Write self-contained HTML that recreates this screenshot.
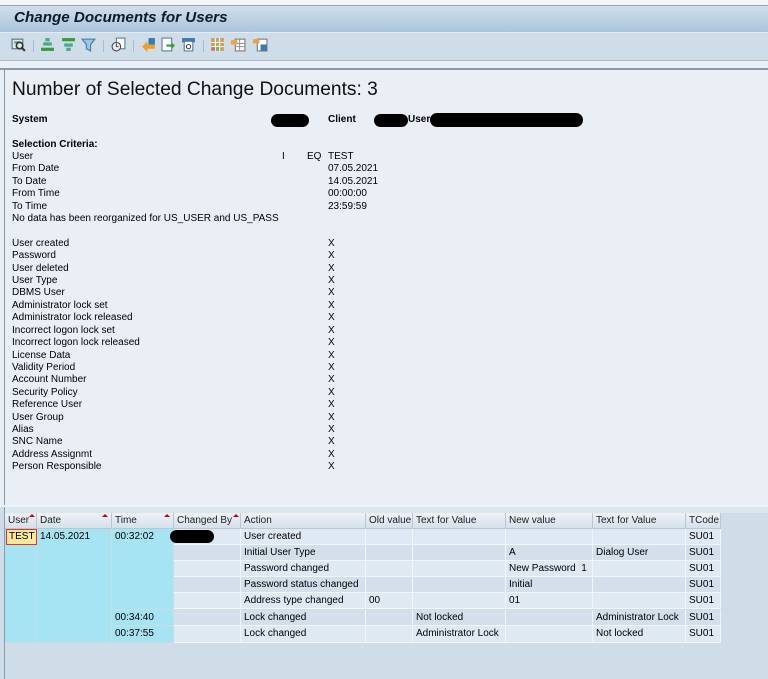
<!DOCTYPE html>
<html><head><meta charset="utf-8"><style>
*{margin:0;padding:0;box-sizing:border-box}
body{width:768px;height:679px;overflow:hidden;background:#e9eff5;font-family:"Liberation Sans",Tahoma,sans-serif;font-size:10px;color:#000;position:relative}
.a{position:absolute;white-space:nowrap}
.blk{position:absolute;background:#000;border-radius:7px}
.ic{position:absolute;top:37px;width:15px;height:15px}
.sep{position:absolute;top:40px;width:1px;height:12px;background:#a9bccd}
.c{position:absolute;height:16px;line-height:16px;padding-left:3px;white-space:nowrap;overflow:hidden;border-right:1px solid #f2f6fa;border-bottom:1px solid #f2f6fa}
.h{background:linear-gradient(#eef2f6,#d6e0ea);border-right:1px solid #b9c6d3;border-bottom:1px solid #b9c6d3;color:#222}
.k{background:#a6e3f3;border-right:1px solid #c9dde6;border-bottom:1px solid #c9dde6}
.r0{background:#dfe9f4}
.r1{background:#d3dfeb}
.tri{position:absolute;top:1px;width:0;height:0;border-left:3px solid transparent;border-right:3px solid transparent;border-bottom:3px solid #c00}
</style></head><body>
<div class="a" style="left:0;top:0;width:768px;height:5px;background:#f3f5f8"></div>
<div class="a" style="left:0;top:5px;width:768px;height:1px;background:#9aa8b6"></div>
<div class="a" style="left:0;top:6px;width:768px;height:26px;background:linear-gradient(#d0dfed,#aac4dc)"></div>
<div class="a" style="left:14px;top:9px;font-size:15.2px;font-weight:bold;font-style:italic;color:#0c1a2a">Change Documents for Users</div>
<div class="a" style="left:0;top:32px;width:768px;height:28px;background:#cedde8;border-top:1px solid #e3ecf3"></div>
<div class="a" style="left:0;top:60px;width:768px;height:1px;background:#a9b9cb"></div>
<div class="a" style="left:0;top:61px;width:768px;height:7px;background:#eaf0f5"></div>
<div class="a" style="left:0;top:68px;width:768px;height:2px;background:#8a9cab"></div>

<svg class="ic" style="left:11px" viewBox="0 0 14 14"><rect x="1" y="2" width="10" height="9" fill="#dfe8ef" stroke="#5a6b78"/><rect x="3" y="4" width="5" height="2" fill="#4ab04a"/><circle cx="8" cy="8" r="3" fill="none" stroke="#333" stroke-width="1.5"/><path d="M10 10l3 3" stroke="#333" stroke-width="2"/></svg>
<div class="sep" style="left:33px"></div>
<svg class="ic" style="left:40px" viewBox="0 0 14 14"><rect x="5" y="1" width="4" height="3" fill="#4a8"/><rect x="3" y="5" width="8" height="3" fill="#4a8"/><rect x="1" y="10" width="12" height="3" fill="#3a9a3a"/></svg>
<svg class="ic" style="left:61px" viewBox="0 0 14 14"><rect x="1" y="1" width="12" height="3" fill="#3a9a3a"/><rect x="3" y="6" width="8" height="3" fill="#4a8"/><rect x="5" y="10" width="4" height="3" fill="#4a8"/></svg>
<svg class="ic" style="left:81px" viewBox="0 0 14 14"><path d="M1 2h12l-4 5v6l-4-2v-4z" fill="#9cc6e0" stroke="#3d7aa6"/></svg>
<div class="sep" style="left:103px"></div>
<svg class="ic" style="left:111px" viewBox="0 0 14 14"><rect x="5" y="1" width="8" height="10" fill="#fff" stroke="#5b7a99"/><circle cx="5" cy="9" r="4" fill="#eef" stroke="#444"/><path d="M5 6v3h2" stroke="#444" fill="none"/></svg>
<div class="sep" style="left:133px"></div>
<svg class="ic" style="left:141px" viewBox="0 0 14 14"><path d="M1 9l5-5v3h7v4H6v3z" fill="#f0a020"/><rect x="7" y="1" width="6" height="6" fill="#3c78b4"/></svg>
<svg class="ic" style="left:161px" viewBox="0 0 14 14"><rect x="1" y="1" width="9" height="12" fill="#fff" stroke="#5b7a99"/><path d="M5 7h5V5l3 3-3 3V9H5z" fill="#3a9a3a"/></svg>
<svg class="ic" style="left:181px" viewBox="0 0 14 14"><rect x="1" y="1" width="12" height="4" fill="#3c78b4"/><rect x="3" y="4" width="8" height="9" fill="#fff" stroke="#5b7a99"/><circle cx="7" cy="9" r="2" fill="none" stroke="#444"/></svg>
<div class="sep" style="left:203px"></div>
<svg class="ic" style="left:210px" viewBox="0 0 14 14"><rect x="1" y="1" width="12" height="12" fill="#c9a064"/><path d="M1 5h12M1 9h12M5 1v12M9 1v12" stroke="#fff"/><rect x="1.5" y="9.5" width="3" height="3" fill="#d66"/><rect x="5.5" y="9.5" width="3" height="3" fill="#6b6"/></svg>
<svg class="ic" style="left:231px" viewBox="0 0 14 14"><rect x="4" y="2" width="9" height="11" fill="#fff" stroke="#777"/><path d="M4 6h9M4 9h9M8 2v11" stroke="#999"/><rect x="0" y="3" width="6" height="4" fill="#f0a040"/></svg>
<svg class="ic" style="left:253px" viewBox="0 0 14 14"><rect x="4" y="2" width="9" height="11" fill="#fff" stroke="#777"/><rect x="0" y="2" width="6" height="4" fill="#f0a040"/><rect x="7" y="7" width="6" height="6" fill="#3c78b4"/></svg>

<div class="a" style="left:4px;top:70px;width:1px;height:436px;background:#8a9cab"></div>
<div class="a" style="left:12px;top:79px;font-size:19.2px;color:#111">Number of Selected Change Documents: 3</div>
<div class="a" style="left:12px;top:114px;font-weight:bold">System</div>
<div class="blk" style="left:271px;top:114px;width:38px;height:13px"></div>
<div class="a" style="left:328px;top:114px;font-weight:bold">Client</div>
<div class="blk" style="left:374px;top:114px;width:34px;height:13px"></div>
<div class="a" style="left:408px;top:114px;font-weight:bold">User</div>
<div class="blk" style="left:430px;top:113px;width:153px;height:14px"></div>
<div class="a" style="left:12px;top:139px;font-weight:bold">Selection Criteria:</div>
<div class="a" style="left:12px;top:151px;line-height:12.4px">User<br>From Date<br>To Date<br>From Time<br>To Time<br>No data has been reorganized for US_USER and US_PASS<br><br>User created<br>Password<br>User deleted<br>User Type<br>DBMS User<br>Administrator lock set<br>Administrator lock released<br>Incorrect logon lock set<br>Incorrect logon lock released<br>License Data<br>Validity Period<br>Account Number<br>Security Policy<br>Reference User<br>User Group<br>Alias<br>SNC Name<br>Address Assignmt<br>Person Responsible</div>
<div class="a" style="left:282px;top:151px">I</div>
<div class="a" style="left:307px;top:151px">EQ</div>
<div class="a" style="left:328px;top:151px;line-height:12.4px">TEST<br>07.05.2021<br>14.05.2021<br>00:00:00<br>23:59:59<br><br><br>X<br>X<br>X<br>X<br>X<br>X<br>X<br>X<br>X<br>X<br>X<br>X<br>X<br>X<br>X<br>X<br>X<br>X<br>X</div>

<div class="a" style="left:0;top:505px;width:768px;height:2px;background:#eef3f7"></div>
<div class="a" style="left:0;top:507px;width:768px;height:172px;background:#cfdde9"></div>
<div class="a" style="left:4px;top:507px;width:1px;height:172px;background:#8a9cab"></div>
<div class="a" style="left:5px;top:507px;width:763px;height:6px;background:#dbe6ef"></div>

<div class="c h" style="left:5px;top:513px;width:32px">User<span class="tri" style="left:24px"></span></div>
<div class="c h" style="left:37px;top:513px;width:75px">Date<span class="tri" style="left:65px"></span></div>
<div class="c h" style="left:112px;top:513px;width:62px">Time<span class="tri" style="left:52px"></span></div>
<div class="c h" style="left:174px;top:513px;width:67px">Changed By<span class="tri" style="left:59px"></span></div>
<div class="c h" style="left:241px;top:513px;width:125px">Action</div>
<div class="c h" style="left:366px;top:513px;width:47px">Old value</div>
<div class="c h" style="left:413px;top:513px;width:93px">Text for Value</div>
<div class="c h" style="left:506px;top:513px;width:87px">New value</div>
<div class="c h" style="left:593px;top:513px;width:93px">Text for Value</div>
<div class="c h" style="left:686px;top:513px;width:35px">TCode</div>

<div class="c k" style="left:5px;top:529px;width:32px;height:114px"></div>
<div class="a" style="left:6px;top:529px;width:31px;height:16px;background:#fde89a;border:1px solid #d33;line-height:14px;padding-left:2px">TEST</div>
<div class="c k" style="left:37px;top:529px;width:75px;height:114px">14.05.2021</div>
<div class="c k" style="left:112px;top:529px;width:62px;height:81px">00:32:02</div>
<div class="c k" style="left:112px;top:610px;width:62px">00:34:40</div>
<div class="c k" style="left:112px;top:626px;width:62px;height:17px">00:37:55</div>

<div class="c r0" style="left:174px;top:529px;width:67px"></div><div class="blk" style="left:170px;top:530px;width:44px;height:13px"></div>
<div class="c r0" style="left:241px;top:529px;width:125px">User created</div><div class="c r0" style="left:366px;top:529px;width:47px"></div><div class="c r0" style="left:413px;top:529px;width:93px"></div><div class="c r0" style="left:506px;top:529px;width:87px"></div><div class="c r0" style="left:593px;top:529px;width:93px"></div><div class="c r0" style="left:686px;top:529px;width:35px">SU01</div>
<div class="c r1" style="left:174px;top:545px;width:67px"></div><div class="c r1" style="left:241px;top:545px;width:125px">Initial User Type</div><div class="c r1" style="left:366px;top:545px;width:47px"></div><div class="c r1" style="left:413px;top:545px;width:93px"></div><div class="c r1" style="left:506px;top:545px;width:87px">A</div><div class="c r1" style="left:593px;top:545px;width:93px">Dialog User</div><div class="c r1" style="left:686px;top:545px;width:35px">SU01</div>
<div class="c r0" style="left:174px;top:561px;width:67px"></div><div class="c r0" style="left:241px;top:561px;width:125px">Password changed</div><div class="c r0" style="left:366px;top:561px;width:47px"></div><div class="c r0" style="left:413px;top:561px;width:93px"></div><div class="c r0" style="left:506px;top:561px;width:87px">New Password&nbsp; 1</div><div class="c r0" style="left:593px;top:561px;width:93px"></div><div class="c r0" style="left:686px;top:561px;width:35px">SU01</div>
<div class="c r1" style="left:174px;top:577px;width:67px"></div><div class="c r1" style="left:241px;top:577px;width:125px">Password status changed</div><div class="c r1" style="left:366px;top:577px;width:47px"></div><div class="c r1" style="left:413px;top:577px;width:93px"></div><div class="c r1" style="left:506px;top:577px;width:87px">Initial</div><div class="c r1" style="left:593px;top:577px;width:93px"></div><div class="c r1" style="left:686px;top:577px;width:35px">SU01</div>
<div class="c r0" style="left:174px;top:593px;width:67px"></div><div class="c r0" style="left:241px;top:593px;width:125px">Address type changed</div><div class="c r0" style="left:366px;top:593px;width:47px">00</div><div class="c r0" style="left:413px;top:593px;width:93px"></div><div class="c r0" style="left:506px;top:593px;width:87px">01</div><div class="c r0" style="left:593px;top:593px;width:93px"></div><div class="c r0" style="left:686px;top:593px;width:35px">SU01</div>
<div class="c r1" style="left:174px;top:610px;width:67px"></div><div class="c r1" style="left:241px;top:610px;width:125px">Lock changed</div><div class="c r1" style="left:366px;top:610px;width:47px"></div><div class="c r1" style="left:413px;top:610px;width:93px">Not locked</div><div class="c r1" style="left:506px;top:610px;width:87px"></div><div class="c r1" style="left:593px;top:610px;width:93px">Administrator Lock</div><div class="c r1" style="left:686px;top:610px;width:35px">SU01</div>
<div class="c r0" style="left:174px;top:626px;width:67px;height:17px"></div><div class="c r0" style="left:241px;top:626px;width:125px;height:17px">Lock changed</div><div class="c r0" style="left:366px;top:626px;width:47px;height:17px"></div><div class="c r0" style="left:413px;top:626px;width:93px;height:17px">Administrator Lock</div><div class="c r0" style="left:506px;top:626px;width:87px;height:17px"></div><div class="c r0" style="left:593px;top:626px;width:93px;height:17px">Not locked</div><div class="c r0" style="left:686px;top:626px;width:35px;height:17px">SU01</div>
</body></html>
